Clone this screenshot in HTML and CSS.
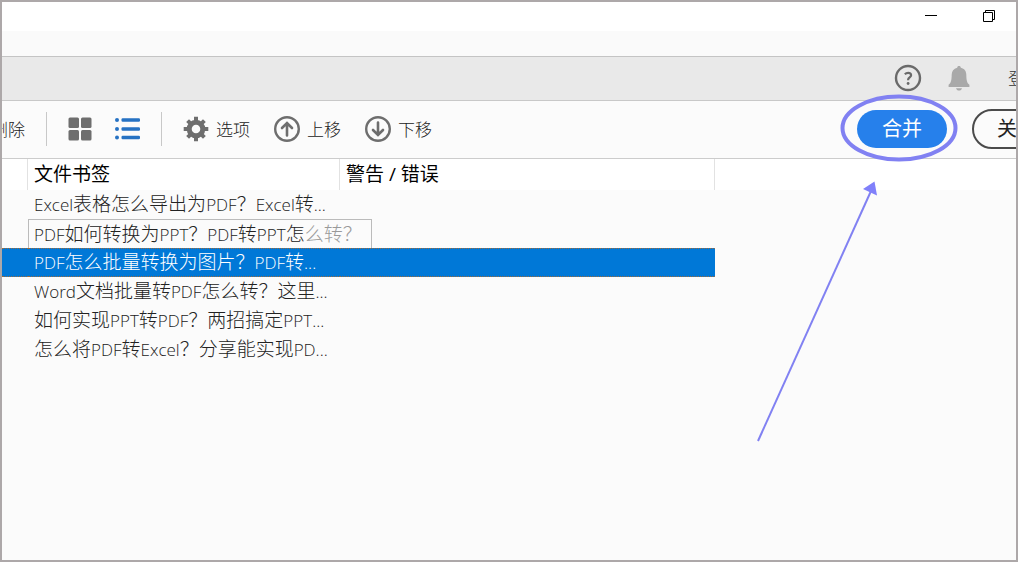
FILE: index.html
```html
<!DOCTYPE html>
<html lang="zh-CN">
<head>
    <meta charset="UTF-8">
    <meta name="viewport" content="width=device-width, initial-scale=1.0">
    <title>合并文件</title>
    <link rel="stylesheet" href="styles.css">
</head>
<body>
    <div class="window">
        <div class="title-bar">
            <button type="button" class="icon-button" aria-label="最小化">
                <svg width="14" height="14" viewBox="0 0 14 14"><path d="M1 6.500h12" stroke="#000" fill="none"/></svg>
            </button>
            <button type="button" class="icon-button" aria-label="还原">
                <svg width="14" height="14" viewBox="0 0 14 14"><path d="M1.500 3.500h9v9h-9zM3.500 3V1.500h9v9H11" stroke="#000" fill="none"/></svg>
            </button>
        </div>
        <div class="menu-bar"></div>

        <div class="account-bar">
            <button type="button" class="icon-button" aria-label="帮助">
                <svg width="28" height="28" viewBox="0 0 28 28" fill="none" stroke="#6a6a6a">
                    <circle cx="14" cy="14" r="12" stroke-width="2.400"/>
                    <path d="M10.800 10.200q1.400-1.300 3.300-1.300c1.900 0 3 .9 3 2.400 0 2.100-3 2.300-3 4.600v.4" stroke-width="2.200"/>
                    <circle cx="14.100" cy="19.500" r="1.400" fill="#6a6a6a" stroke="none"/>
                </svg>
            </button>
            <button type="button" class="icon-button" aria-label="通知">
                <svg width="22" height="26" viewBox="0 0 22 26" fill="#a9a9a9">
                    <path d="M11 1c1.200 0 1.700.7 1.800 1.700 3.700.8 5.400 3.400 5.500 6.800.1 5.400.6 8.500 3.100 10.300V22H.6v-2.200c2.500-1.800 3-4.900 3.100-10.300.1-3.400 1.800-6 5.500-6.800C9.300 1.700 9.800 1 11 1z"/>
                    <path d="M8 23.200h6c-.5 1.500-1.500 2.300-3 2.300s-2.500-.8-3-2.300z"/>
                </svg>
            </button>
            <a href="#" class="login">登录</a>
        </div>

        <div class="toolbar">
            <button type="button" class="tool">删除</button>
            <span class="divider"></span>
            <button type="button" class="icon-button" aria-label="缩略图视图">
                <svg width="24" height="24" viewBox="0 0 24 24" fill="#6e6e6e">
                    <rect x="0.500" y="0.500" width="10.500" height="10.500" rx="1.500"/>
                    <rect x="13" y="0.500" width="10.500" height="10.500" rx="1.500"/>
                    <rect x="0.500" y="13" width="10.500" height="10.500" rx="1.500"/>
                    <rect x="13" y="13" width="10.500" height="10.500" rx="1.500"/>
                </svg>
            </button>
            <button type="button" class="icon-button" aria-label="列表视图">
                <svg width="27" height="24" viewBox="0 0 27 24" fill="#2672c3">
                    <circle cx="4" cy="3" r="2"/><rect x="8.500" y="1.200" width="18.500" height="3.600" rx="1.200"/>
                    <circle cx="4" cy="12" r="2"/><rect x="8.500" y="10.200" width="18.500" height="3.600" rx="1.200"/>
                    <circle cx="4" cy="20.500" r="2"/><rect x="8.500" y="18.700" width="18.500" height="3.600" rx="1.200"/>
                </svg>
            </button>
            <span class="divider"></span>
            <div class="tools">
                <button type="button" class="tool">
                    <svg width="26" height="26" viewBox="0 0 26 26" fill="none" stroke="#6e6e6e">
                        <circle cx="13" cy="13" r="6.800" stroke-width="5"/>
                        <path d="M13 .7v4M13 21.300v4M.7 13h4M21.300 13h4M4.600 4.600l2.800 2.800M18.600 18.600l2.800 2.800M4.600 21.400l2.800-2.800M18.600 7.400l2.800-2.800" stroke-width="4" stroke-linecap="butt"/>
                    </svg>
                    选项
                </button>
                <button type="button" class="tool">
                    <svg width="26" height="26" viewBox="0 0 26 26" fill="none" stroke="#6e6e6e" stroke-width="2.400">
                        <circle cx="13" cy="13" r="11.800"/>
                        <path d="M13 19.500V8M8 12l5-5 5 5" stroke-width="2.600" stroke-linecap="round"/>
                    </svg>
                    上移
                </button>
                <button type="button" class="tool">
                    <svg width="26" height="26" viewBox="0 0 26 26" fill="none" stroke="#6e6e6e" stroke-width="2.400">
                        <circle cx="13" cy="13" r="11.800"/>
                        <path d="M13 6.500V18M8 14l5 5 5-5" stroke-width="2.600" stroke-linecap="round"/>
                    </svg>
                    下移
                </button>
            </div>
            <div class="actions">
                <button type="button" class="pill merge">合并</button>
                <button type="button" class="pill close">关闭</button>
            </div>
        </div>

        <table class="file-list">
            <thead>
                <tr>
                    <th class="col-handle"></th>
                    <th class="col-bookmark">文件书签</th>
                    <th class="col-warning">警告 / 错误</th>
                    <th class="col-rest"></th>
                </tr>
            </thead>
            <tbody>
                <tr><td></td><td><span class="en">Excel</span>表格怎么导出为<span class="en">PDF</span>？<span class="en">Excel</span>转<span class="en">...</span></td><td></td><td></td></tr>
                <tr><td></td><td class="tip-cell"><span class="tip"><span class="en">PDF</span>如何转换为<span class="en">PPT</span>？<span class="en">PDF</span>转<span class="en">PPT</span>怎<span class="faded">么转？</span></span></td><td></td><td></td></tr>
                <tr class="selected"><td></td><td><span class="en">PDF</span>怎么批量转换为图片？<span class="en">PDF</span>转<span class="en">...</span></td><td></td><td></td></tr>
                <tr><td></td><td><span class="en">Word</span>文档批量转<span class="en">PDF</span>怎么转？这里<span class="en">...</span></td><td></td><td></td></tr>
                <tr><td></td><td>如何实现<span class="en">PPT</span>转<span class="en">PDF</span>？两招搞定<span class="en">PPT...</span></td><td></td><td></td></tr>
                <tr><td></td><td>怎么将<span class="en">PDF</span>转<span class="en">Excel</span>？分享能实现<span class="en">PD...</span></td><td></td><td></td></tr>
            </tbody>
        </table>

        <!-- highlight ring and arrow pointing at the merge button -->
        <svg class="callout" width="202" height="350" viewBox="0 0 202 350" fill="none" stroke="#8181f2">
            <ellipse cx="143" cy="36" rx="56.500" ry="31.500" stroke-width="4"/>
            <path d="M2 349L115 99" stroke-width="2"/>
            <path d="M118.500 89.500l2.500 14-14-6.500z" fill="#8080fa" stroke="none"/>
        </svg>
    </div>
</body>
</html>
```
FILE: styles.css
```css
* {
    box-sizing: border-box;
}
body {
    margin: 0;
    padding: 0 1px 1px 0;
    background-color: #fff;
    font-family: "Open Sans", "Noto Sans CJK SC", sans-serif;
    font-size: 17px;
    font-weight: 300;
    color: #222;
}
button {
    font: inherit;
    color: inherit;
    padding: 0;
    border: none;
    background: none;
    cursor: pointer;
}
svg {
    display: block;
}
.window {
    position: relative;
    min-height: calc(100vh - 1px);
    border: 2px solid #ada8a9;
    background-color: #fbfbfb;
    overflow: hidden;
}
.title-bar {
    display: flex;
    justify-content: flex-end;
    align-items: center;
    gap: 44px;
    height: 29px;
    padding: 0 20px 2px 0;
    background-color: #fff;
}
.menu-bar {
    height: 25px;
    background-color: #fafafa;
}
.account-bar {
    display: flex;
    justify-content: flex-end;
    align-items: center;
    gap: 26px;
    height: 45px;
    margin-right: -26px;
    padding-bottom: 2px;
    border-top: 1px solid #c4c4c4;
    border-bottom: 1px solid #c8c8c8;
    background-color: #e9e9e9;
}
.login {
    margin-left: 12px;
    color: #333;
    text-decoration: none;
}
.toolbar {
    display: flex;
    align-items: center;
    gap: 21px;
    height: 58px;
    margin-left: -11px;
    margin-right: -46px;
    padding-bottom: 2px;
    border-bottom: 1px solid #ccc;
}
.divider {
    width: 1px;
    height: 34px;
    background-color: #c8c8c8;
}
.tools {
    display: flex;
    gap: 24px;
}
.tool {
    display: flex;
    align-items: center;
    gap: 7px;
    white-space: nowrap;
}
.actions {
    display: flex;
    align-items: center;
    gap: 25px;
    margin-left: auto;
}
.pill {
    width: 90px;
    height: 38px;
    border-radius: 20px;
    font-size: 20px;
    font-weight: 400;
    line-height: 20px;
}
.merge {
    background-color: #2680eb;
    color: #fff;
}
.close {
    height: 40px;
    border: 2px solid #4b4b4b;
}
.file-list {
    width: 100%;
    table-layout: fixed;
    border-collapse: separate;
    border-spacing: 0;
    font-size: 19px;
    line-height: 29px;
}
.file-list th {
    height: 31px;
    padding: 0 6px;
    border-right: 1px solid #e2e2e2;
    background-color: #fff;
    color: #000;
    font-weight: 400;
    text-align: left;
}
.file-list .col-rest {
    border-right: none;
}
.file-list td {
    height: 29px;
    padding: 0 6px;
    white-space: nowrap;
}
.col-handle {
    width: 26px;
}
.col-bookmark {
    width: 312px;
}
.col-warning {
    width: 375px;
}
.en {
    font-size: 17px;
}
.file-list .tip-cell {
    padding: 0;
}
.tip {
    display: block;
    width: 344px;
    height: 29px;
    padding-left: 5px;
    border: 1px solid #bbb;
    border-bottom: none;
}
.faded {
    color: #999;
}
.selected td:not(:last-child) {
    border-top: 1px dotted #9c6a3c;
    border-bottom: 1px dotted #9c6a3c;
    background-color: #0078d7;
    color: #fff;
    line-height: 27px;
}
.callout {
    position: absolute;
    top: 90px;
    right: 58px;
    pointer-events: none;
}
```
